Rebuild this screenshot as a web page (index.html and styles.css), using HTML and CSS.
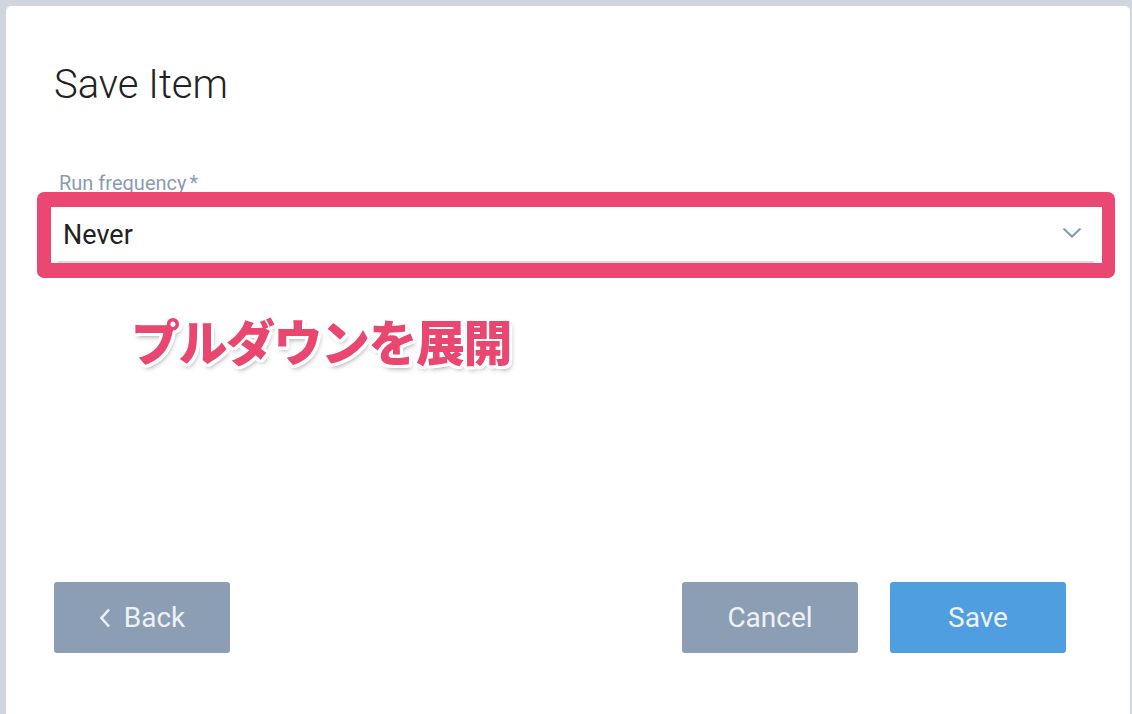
FILE: index.html
```html
<!DOCTYPE html>
<html lang="ja">
<head>
<meta charset="utf-8">
<title>Save Item</title>
<link rel="stylesheet" href="styles.css">
</head>
<body>
<div class="backdrop">
  <div class="modal">
    <h1 class="title">Save Item</h1>
    <div class="field">
      <label class="label">Run frequency<span class="req">*</span></label>
      <div class="select">
        <span class="value">Never</span>
        <svg class="chev" width="20" height="11" viewBox="0 0 20 11"><path d="M1.5 1.5 L10 9.5 L18.5 1.5" fill="none" stroke="#8a9bb0" stroke-width="2.2"/></svg>
        <div class="highlight"></div>
      </div>
    </div>
    <div class="note">プルダウンを展開</div>
    <div class="actions">
      <button class="btn btn-grey btn-back"><svg width="12" height="20" viewBox="0 0 12 20"><path d="M10 1.5 L2.5 10 L10 18.5" fill="none" stroke="#eef2f7" stroke-width="2.6"/></svg>Back</button>
      <div class="right">
        <button class="btn btn-grey">Cancel</button>
        <button class="btn btn-blue">Save</button>
      </div>
    </div>
  </div>
</div>
</body>
</html>
```
FILE: styles.css
```css
html, body {
  margin: 0;
  height: 100%;
}
body {
  background: #cfd6de;
  overflow: hidden;
  font-family: Roboto, "Liberation Sans", sans-serif;
}
.backdrop {
  box-sizing: border-box;
  height: 714px;
  padding: 6px 2px 0 6px;
}
.modal {
  box-sizing: border-box;
  height: 708px;
  background: #fff;
  border-radius: 5px 5px 0 0;
  padding: 0 36px 0 48px;
  display: flex;
  flex-direction: column;
}
.title {
  margin: 55px 0 0 0;
  font-size: 40px;
  line-height: 48px;
  font-weight: 300;
  color: #222;
}
.field {
  margin: 63px 0 0 4px;
}
.label {
  display: block;
  font-size: 20px;
  line-height: 22px;
  color: #8a9bb0;
  margin-left: 1px;
  margin-top: 0;
}
.req {
  margin-left: 3px;
}
.select {
  position: relative;
  height: 54px;
  margin-top: 13px;
  border-bottom: 2px solid #dddddd;
  display: flex;
  align-items: center;
  justify-content: space-between;
  padding: 0 12px 0 5px;
}
.value {
  font-size: 27px;
  color: #222;
  margin-top: 2px;
}
.chev {
  margin-top: -4px;
}
.highlight {
  position: absolute;
  left: -21px;
  top: -15px;
  right: -21px;
  bottom: -17px;
  border: 14px solid #ea4872;
  border-top-width: 15px;
  border-bottom-width: 15px;
  border-right-width: 13px;
  border-radius: 7px;
  pointer-events: none;
}
.note {
  margin: 47px 0 0 77px;
  font-family: "Noto Sans CJK JP", sans-serif;
  font-weight: 900;
  font-size: 49px;
  line-height: 60px;
  color: #e9476f;
  letter-spacing: -1.5px;
  text-shadow:
    3px 0 0 #fff, -3px 0 0 #fff, 0 3px 0 #fff, 0 -3px 0 #fff,
    2px 2px 0 #fff, -2px 2px 0 #fff, 2px -2px 0 #fff, -2px -2px 0 #fff,
    3px 2px 0 #fff, -3px 2px 0 #fff, 2px 3px 0 #fff, -2px 3px 0 #fff,
    2px 4px 5px rgba(0,0,0,0.35);
}
.actions {
  margin-top: auto;
  margin-bottom: 61px;
  padding-right: 28px;
  display: flex;
  justify-content: space-between;
}
.right {
  display: flex;
  gap: 32px;
}
.btn {
  width: 176px;
  height: 71px;
  border: 0;
  border-radius: 3px;
  font-family: Roboto, "Liberation Sans", sans-serif;
  font-size: 28px;
  color: #eef2f7;
  display: flex;
  align-items: center;
  justify-content: center;
  padding: 0;
}
.btn-grey {
  background: #8b9eb3;
}
.btn-blue {
  background: #4f9fe0;
}
.btn-back svg {
  margin-right: 13px;
}
```
